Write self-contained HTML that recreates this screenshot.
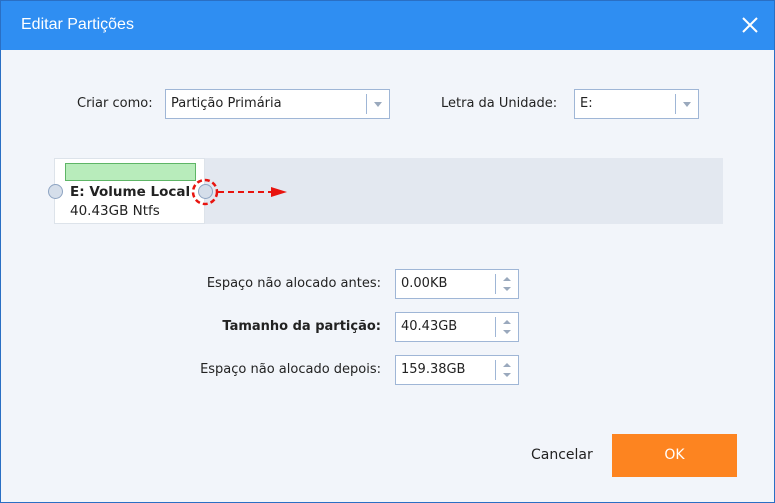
<!DOCTYPE html>
<html><head><meta charset="utf-8"><style>
*{margin:0;padding:0;box-sizing:border-box}
body{width:775px;height:503px;overflow:hidden;font-family:"DejaVu Sans",sans-serif;font-size:13px;color:#222}
.win{position:absolute;left:0;top:0;width:775px;height:503px;background:#f2f5fa;border:1px solid #2a6fc4}
.tb{position:absolute;left:0;top:0;width:773px;height:49px;background:#2f8ef2;color:#fff}
.tb .t{position:absolute;left:20px;top:15px;font-size:16px;font-family:"Liberation Sans",sans-serif}
.ab{position:absolute}
.in{position:absolute;background:#fff;border:1px solid #9fb6d6;height:30px;padding:6px 0 0 5px}
.sep{position:absolute;right:22px;top:4px;width:1px;height:20px;background:#9fb6d6}
.dd{position:absolute;right:7px;top:12px;border-left:4px solid transparent;border-right:4px solid transparent;border-top:5px solid #9aa9bd}
.up{position:absolute;right:7px;top:7px;border-left:4px solid transparent;border-right:4px solid transparent;border-bottom:4px solid #9aa9bd}
.dn{position:absolute;right:7px;top:17px;border-left:4px solid transparent;border-right:4px solid transparent;border-top:4px solid #9aa9bd}
.lab{position:absolute;right:393px;text-align:right;white-space:nowrap}
.c{position:absolute;width:15px;height:15px;border-radius:50%;background:#d5deea;border:1px solid #8ea4c2}
</style></head><body><div class="win">
<div class="tb"><div class="t">Editar Partições</div>
<svg class="ab" style="left:741px;top:16px" width="16" height="16"><path d="M1 1L15 15M15 1L1 15" stroke="#fff" stroke-width="2"/></svg></div>
<div class="ab" style="left:76px;top:95px">Criar como:</div>
<div class="in" style="left:164px;top:88px;width:225px">Partição Primária<div class="sep"></div><div class="dd"></div></div>
<div class="ab" style="left:440px;top:95px">Letra da Unidade:</div>
<div class="in" style="left:573px;top:88px;width:125px">E:<div class="sep"></div><div class="dd"></div></div>
<div class="ab" style="left:53px;top:157px;width:669px;height:66px;background:#e3e8f0"></div>
<div class="ab" style="left:53px;top:157px;width:151px;height:66px;background:#fff;border:1px solid #dde3ea"></div>
<div class="ab" style="left:64px;top:162px;width:131px;height:18px;background:#b8ecbb;border:1px solid #5eb566"></div>
<div class="ab" style="left:69px;top:183px;font-weight:bold;font-size:13.5px;white-space:nowrap">E: Volume Local</div>
<div class="ab" style="left:69px;top:202px;font-size:13.5px">40.43GB Ntfs</div>
<div class="c" style="left:47px;top:183px"></div>
<div class="c" style="left:197px;top:183px"></div>
<svg class="ab" style="left:190px;top:175px" width="100" height="34"><circle cx="14" cy="16" r="12" fill="none" stroke="#e8140f" stroke-width="2.5" stroke-dasharray="5 3"/><path d="M27 16H80" stroke="#e8140f" stroke-width="2" stroke-dasharray="6 4"/><path d="M80 11L96 16L80 21Z" fill="#e8140f"/></svg>
<div class="lab" style="top:275px">Espaço não alocado antes:</div>
<div class="lab" style="top:318px;font-weight:bold">Tamanho da partição:</div>
<div class="lab" style="top:361px">Espaço não alocado depois:</div>
<div class="in" style="left:394px;top:268px;width:124px">0.00KB<div class="sep"></div><div class="up"></div><div class="dn"></div></div>
<div class="in" style="left:394px;top:311px;width:124px">40.43GB<div class="sep"></div><div class="up"></div><div class="dn"></div></div>
<div class="in" style="left:394px;top:354px;width:124px">159.38GB<div class="sep"></div><div class="up"></div><div class="dn"></div></div>
<div class="ab" style="left:530px;top:446px;font-size:14px">Cancelar</div>
<div class="ab" style="left:611px;top:433px;width:125px;height:43px;background:#fd8420;color:#fff;font-size:14px;text-align:center;line-height:43px">OK</div>
</div></body></html>
